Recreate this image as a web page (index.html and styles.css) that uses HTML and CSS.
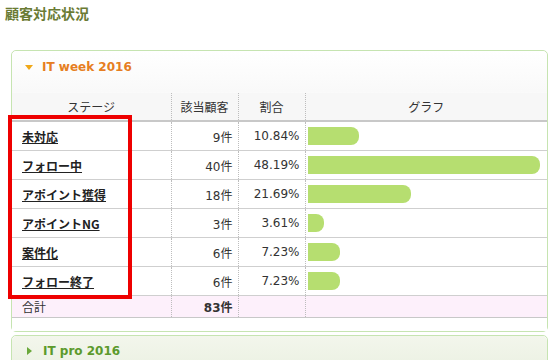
FILE: index.html
```html
<!DOCTYPE html>
<html lang="ja">
<head>
<meta charset="utf-8">
<link rel="stylesheet" href="styles.css">
</head>
<body>
<h1 class="page-title">顧客対応状況</h1>
<div class="panel open">
  <div class="panel-head"><span class="tri tri-down"></span><span class="panel-title">IT week 2016</span></div>
  <div class="panel-body">
    <div class="table-wrap">
      <table class="stats">
        <colgroup><col class="w-stage"><col class="w-count"><col class="w-ratio"><col></colgroup>
        <thead>
          <tr><th>ステージ</th><th>該当顧客</th><th>割合</th><th>グラフ</th></tr>
        </thead>
        <tbody>
          <tr><td class="c-stage"><a href="#">未対応</a></td><td class="c-num">9件</td><td class="c-num">10.84%</td><td class="c-graph"><div class="bar" style="width:51px"></div></td></tr>
          <tr><td class="c-stage"><a href="#">フォロー中</a></td><td class="c-num">40件</td><td class="c-num">48.19%</td><td class="c-graph"><div class="bar" style="width:232px"></div></td></tr>
          <tr><td class="c-stage"><a href="#">アポイント獲得</a></td><td class="c-num">18件</td><td class="c-num">21.69%</td><td class="c-graph"><div class="bar" style="width:103px"></div></td></tr>
          <tr><td class="c-stage"><a href="#">アポイントNG</a></td><td class="c-num">3件</td><td class="c-num">3.61%</td><td class="c-graph"><div class="bar" style="width:16px"></div></td></tr>
          <tr><td class="c-stage"><a href="#">案件化</a></td><td class="c-num">6件</td><td class="c-num">7.23%</td><td class="c-graph"><div class="bar" style="width:32px"></div></td></tr>
          <tr><td class="c-stage"><a href="#">フォロー終了</a></td><td class="c-num">6件</td><td class="c-num">7.23%</td><td class="c-graph"><div class="bar" style="width:32px"></div></td></tr>
          <tr class="total"><td class="c-stage">合計</td><td class="c-num strong">83件</td><td class="c-num"></td><td class="c-graph"></td></tr>
        </tbody>
      </table>
      <div class="highlight"></div>
    </div>
  </div>
</div>
<div class="panel closed">
  <div class="panel-head"><span class="tri tri-right"></span><span class="panel-title">IT pro 2016</span></div>
</div>
</body>
</html>
```

FILE: styles.css
```css
html, body {
  margin: 0;
  padding: 0;
  background: #fff;
}
body {
  font-family: "Noto Sans CJK JP", "DejaVu Sans", sans-serif;
  color: #333;
  font-size: 12px;
  width: 553px;
  height: 360px;
  overflow: hidden;
}
.page-title {
  margin: 0;
  padding: 4px 0 0 5px;
  height: 46px;
  box-sizing: border-box;
  font-size: 14px;
  line-height: 18px;
  font-weight: bold;
  color: #6a7b34;
}
.panel {
  margin-left: 11px;
  width: 537px;
  box-sizing: border-box;
  border: 1px solid #c6e4b1;
  border-radius: 5px;
  margin-top: 4px;
}
.panel.open {
  background: #fff;
}
.panel-head {
  display: flex;
  align-items: center;
  height: 40px;
  padding: 0 0 8px 13px;
  box-sizing: border-box;
  background: linear-gradient(#ffffff, #f9f9f9);
  border-radius: 5px 5px 0 0;
}
.panel-title {
  font-family: "DejaVu Sans", sans-serif;
  font-weight: bold;
  font-size: 12px;
  margin-left: 9px;
}
.open .panel-title { color: #e67e22; }
.closed {
  margin-top: 3px;
}
.closed .panel-head {
  background: linear-gradient(#f3f6ec, #ebf1e2);
  height: 34px;
  padding-bottom: 4px;
  padding-left: 15px;
}
.closed .panel-title { color: #5c9a2c; margin-left: 11px; }
.tri {
  display: inline-block;
  width: 0;
  height: 0;
}
.tri-down {
  border-left: 4px solid transparent;
  border-right: 4px solid transparent;
  border-top: 5px solid #f0a818;
}
.tri-right {
  border-top: 4px solid transparent;
  border-bottom: 4px solid transparent;
  border-left: 5px solid #6aa83a;
}
.panel-body {
  padding: 2px 0 13px 0;
  background: linear-gradient(#f9f9f9, #ffffff 10px);
}
.table-wrap {
  position: relative;
}
.stats {
  width: 100%;
  border-collapse: collapse;
  table-layout: fixed;
}
.w-stage { width: 159px; }
.w-count { width: 67px; }
.w-ratio { width: 67px; }
.stats th {
  background: #f7f7f7;
  font-weight: normal;
  color: #333;
  height: 27px;
  padding: 0;
  text-align: center;
  border-bottom: 2px solid #c8c8c8;
  font-size: 12px;
}
.stats td {
  height: 28px;
  padding: 0;
  border-bottom: 1px solid #cfcfcf;
  background: #fff;
  font-size: 12px;
  color: #333;
}
.stats th + th, .stats td + td {
  border-left: 1px dotted #bdbdbd;
}
.stats td.c-stage { padding-left: 10px; text-align: left; }
.stats td.c-num {
  text-align: right;
  padding-right: 5px;
  font-family: "DejaVu Sans", "Noto Sans CJK JP", sans-serif;
  font-size: 12px;
}
.stats td.c-graph { padding-left: 2px; }
.stats a {
  color: #222;
  font-weight: bold;
  text-decoration: underline;
}
.bar {
  height: 18px;
  background: #b6de70;
  border-radius: 0 8px 8px 0;
}
.stats tr.total td {
  background: #fdf0fb;
  height: 21px;
  border-bottom: 1px solid #c8c8c8;
}
.strong { font-weight: bold; }
.highlight {
  position: absolute;
  left: -4px;
  top: 22px;
  width: 116px;
  height: 176px;
  border: 4px solid #ee0000;
  pointer-events: none;
}
```
